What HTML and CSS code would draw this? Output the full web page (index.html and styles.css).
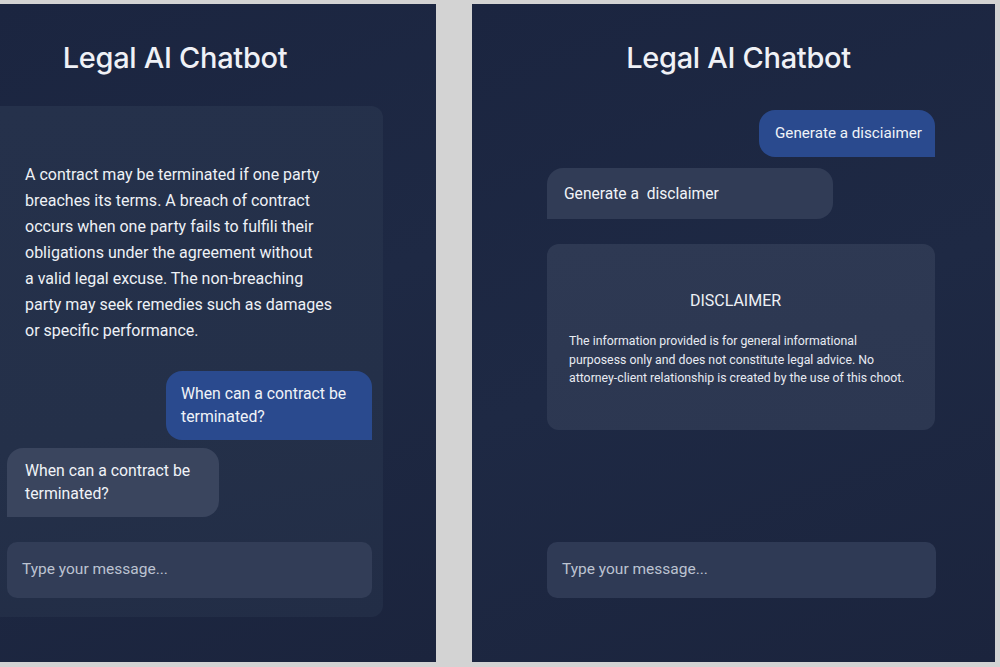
FILE: index.html
```html
<!DOCTYPE html>
<html lang="en">
<head>
<meta charset="utf-8">
<title>Legal AI Chatbot</title>
<link rel="stylesheet" href="styles.css">
</head>
<body>
<div class="stage">
  <section class="panel panel-left">
    <h1 class="title title-left">Legal AI Chatbot</h1>
    <div class="card">
      <p class="answer">A contract may be terminated if one party<br>breaches its terms. A breach of contract<br>occurs when one party fails to fulfili their<br>obligations under the agreement without<br>a valid legal excuse. The non-breaching<br>party may seek remedies such as damages<br>or specific performance.</p>
      <div class="row row-user">
        <div class="bubble user user-left">When can a contract be<br>terminated?</div>
      </div>
      <div class="row">
        <div class="bubble bot bot-left">When can a contract be<br>terminated?</div>
      </div>
      <div class="input input-left">Type your message...</div>
    </div>
  </section>
  <section class="panel panel-right">
    <h1 class="title title-right">Legal AI Chatbot</h1>
    <div class="column">
      <div class="row row-user">
        <div class="bubble user user-right">Generate a disciaimer</div>
      </div>
      <div class="row">
        <div class="bubble bot bot-right">Generate a &nbsp;disclaimer</div>
      </div>
      <div class="disclaimer">
        <h2 class="disc-title">DISCLAIMER</h2>
        <p class="disc-text">The information provided is for general informational<br>purposess only and does not constitute legal advice. No<br>attorney-client relationship is created by the use of this choot.</p>
      </div>
      <div class="spacer"></div>
      <div class="input input-right">Type your message...</div>
    </div>
  </section>
</div>
</body>
</html>
```
FILE: styles.css
```css
* { box-sizing: border-box; }
html, body {
  margin: 0;
  padding: 0;
  background: #d3d3d3;
  font-family: Roboto, "Noto Sans", sans-serif;
  color: #eef1f6;
}
.stage {
  display: flex;
  gap: 36px;
  padding-top: 4px;
  height: 662px;
}
.panel {
  height: 658px;
  background: linear-gradient(160deg, #1b2540 0%, #1e2944 50%, #1b243d 100%);
  display: flex;
  flex-direction: column;
}
.panel-left { width: 436px; }
.panel-right { width: 523px; }
.title {
  margin: 0;
  font-family: Inter, Roboto, sans-serif;
  font-size: 29px;
  font-weight: 500;
  line-height: 38px;
  color: #eff1f6;
  letter-spacing: -0.3px;
  white-space: nowrap;
}
.title-left {
  padding-top: 35px;
  padding-right: 86px;
  text-align: center;
  height: 102px;
}
.title-right {
  padding-top: 35px;
  padding-left: 10px;
  text-align: center;
  height: 106px;
}
.card {
  width: 383px;
  height: 511px;
  background: linear-gradient(170deg, #25314b 0%, #243049 60%, #222d46 100%);
  border-radius: 0 12px 12px 0;
  padding: 55px 11px 19px 7px;
  display: flex;
  flex-direction: column;
}
.answer {
  margin: 0 0 27px 18px;
  padding-top: 1px;
  font-size: 16px;
  line-height: 26px;
  color: #eef1f6;
  white-space: nowrap;
}
.row { display: flex; }
.row-user { justify-content: flex-end; }
.bubble {
  font-size: 15.8px;
  line-height: 23px;
  color: #f0f3f8;
  white-space: nowrap;
}
.user {
  background: #2a4a8e;
  border-radius: 16px 16px 0 16px;
}
.bot {
  border-radius: 16px 16px 16px 0;
}
.user-left {
  width: 206px;
  height: 69px;
  padding: 11px 15px;
}
.bot-left {
  background: #3a455e;
  width: 212px;
  height: 69px;
  padding: 11px 18px;
  margin-top: 8px;
}
.input {
  height: 56px;
  border-radius: 10px;
  background: #2f3a55;
  color: #bcc3d1;
  font-size: 15.5px;
  display: flex;
  align-items: center;
  padding-bottom: 2px;
}
.input-left {
  margin-top: 25px;
  width: 365px;
  padding-left: 15px;
  background: #323d57;
}
.column {
  margin-left: 75px;
  width: 389px;
  flex: 1;
  display: flex;
  flex-direction: column;
  padding-bottom: 64px;
}
.user-right {
  width: 176px;
  height: 47px;
  padding: 12px 0 0 16px;
  margin-right: 1px;
  font-size: 15.2px;
}
.bot-right {
  background: #313c56;
  width: 286px;
  height: 51px;
  padding: 15px 17px 13px;
  margin-top: 11px;
  font-size: 15.6px;
}
.disclaimer {
  margin-top: 25px;
  width: 388px;
  height: 186px;
  border-radius: 12px;
  background: linear-gradient(175deg, #2e3953 0%, #2c3751 100%);
  padding: 47px 22px 0 22px;
}
.disc-title {
  margin: 0 0 21px 0;
  padding-right: 11px;
  font-size: 16px;
  font-weight: 400;
  text-align: center;
  line-height: 20px;
  color: #eef1f6;
}
.disc-text {
  margin: 0;
  font-size: 12.3px;
  line-height: 18.5px;
  color: #e8ebf2;
  white-space: nowrap;
}
.spacer { flex: 1; }
.input-right {
  width: 389px;
  padding-left: 15px;
  background: #2f3a55;
}
```
